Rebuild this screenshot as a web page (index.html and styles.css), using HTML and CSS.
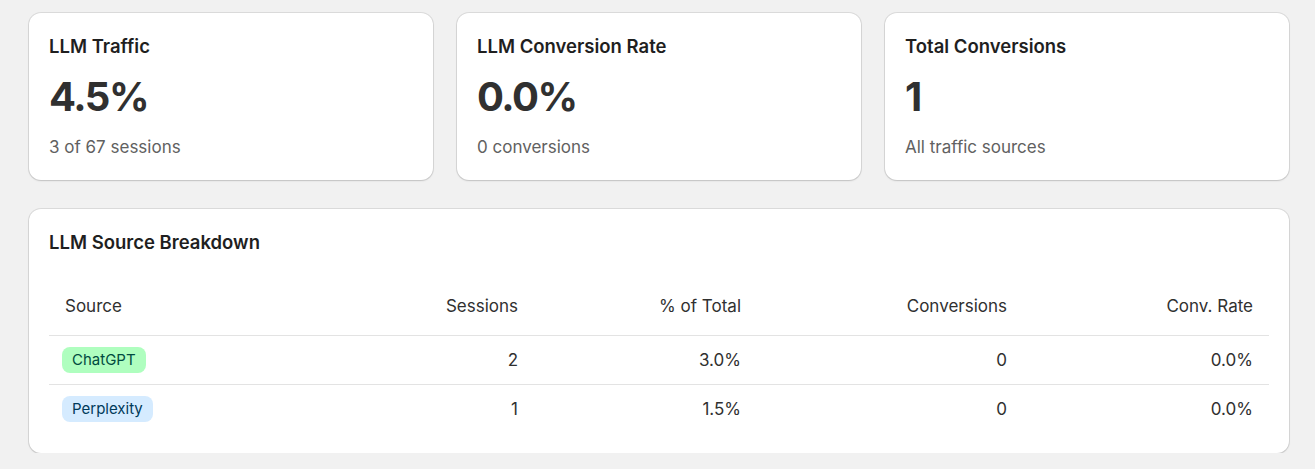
FILE: index.html
```html
<!DOCTYPE html>
<html>
<head>
<meta charset="utf-8">
<link rel="stylesheet" href="styles.css">
</head>
<body>
<div class="page">
  <div class="stats">
    <div class="card stat">
      <h2 class="card-title">LLM Traffic</h2>
      <div class="stat-value">4.5%</div>
      <div class="stat-sub">3 of 67 sessions</div>
    </div>
    <div class="card stat">
      <h2 class="card-title">LLM Conversion Rate</h2>
      <div class="stat-value">0.0%</div>
      <div class="stat-sub">0 conversions</div>
    </div>
    <div class="card stat">
      <h2 class="card-title">Total Conversions</h2>
      <div class="stat-value">1</div>
      <div class="stat-sub">All traffic sources</div>
    </div>
  </div>
  <div class="card breakdown">
    <h2 class="card-title">LLM Source Breakdown</h2>
    <table class="table">
      <colgroup>
        <col class="c1"><col class="c2"><col class="c3"><col class="c4"><col class="c5">
      </colgroup>
      <thead>
        <tr>
          <th class="left">Source</th>
          <th>Sessions</th>
          <th>% of Total</th>
          <th>Conversions</th>
          <th>Conv. Rate</th>
        </tr>
      </thead>
      <tbody>
        <tr>
          <td class="left"><span class="badge badge-green">ChatGPT</span></td>
          <td>2</td>
          <td>3.0%</td>
          <td>0</td>
          <td>0.0%</td>
        </tr>
        <tr>
          <td class="left"><span class="badge badge-blue">Perplexity</span></td>
          <td>1</td>
          <td>1.5%</td>
          <td>0</td>
          <td>0.0%</td>
        </tr>
      </tbody>
    </table>
  </div>
</div>
</body>
</html>
```
FILE: styles.css
```css
* { box-sizing: border-box; }
html, body { margin: 0; padding: 0; }
body {
  background: #f1f1f1;
  font-family: Inter, "Noto Sans", "Liberation Sans", sans-serif;
  color: #303030;
}
.page {
  padding: 13px 26px 0 29px;
  display: flex;
  flex-direction: column;
  gap: 29px;
}
.stats {
  display: grid;
  grid-template-columns: repeat(3, 1fr);
  gap: 24px;
}
.card {
  background: #fff;
  border-radius: 12px;
  box-shadow: 0 0 0 1px rgba(0,0,0,0.09), 0 1px 2px rgba(0,0,0,0.12);
  padding: 21px 20px 20px;
}
.stat { height: 167px; }
.card-title {
  margin: 0;
  font-size: 18.5px;
  font-weight: 600;
  line-height: 24px;
  color: #1f1f1f;
}
.stat-value {
  margin-top: 15px;
  font-size: 40px;
  font-weight: 700;
  line-height: 48px;
  color: #303030;
  letter-spacing: -1.5px;
}
.stat-sub {
  margin-top: 14px;
  font-size: 17px;
  line-height: 24px;
  color: #616161;
}
.breakdown { height: 244px; }
.table {
  margin-top: 32px;
  width: 100%;
  border-collapse: collapse;
  font-size: 17px;
  color: #303030;
}
.c1 { width: 250px; }
.c2 { width: 235px; }
.c3 { width: 223px; }
.c4 { width: 266px; }
.c5 { width: 246px; }
.table th, .table td {
  text-align: right;
  padding: 0 16px;
  font-weight: 400;
}
.table th { height: 49px; vertical-align: middle; padding-bottom: 9px; }
.table td { height: 49px; border-top: 1px solid #e3e3e3; }
.table .left { text-align: left; }
.table td.left { padding-left: 13px; }
.badge {
  display: inline-block;
  padding: 0 10px;
  height: 26px;
  line-height: 26px;
  border-radius: 8px;
  font-size: 15px;
  vertical-align: middle;
}
.badge-green { background: #affebf; color: #014b40; }
.badge-blue { background: #d5ebff; color: #003a5a; }
```
